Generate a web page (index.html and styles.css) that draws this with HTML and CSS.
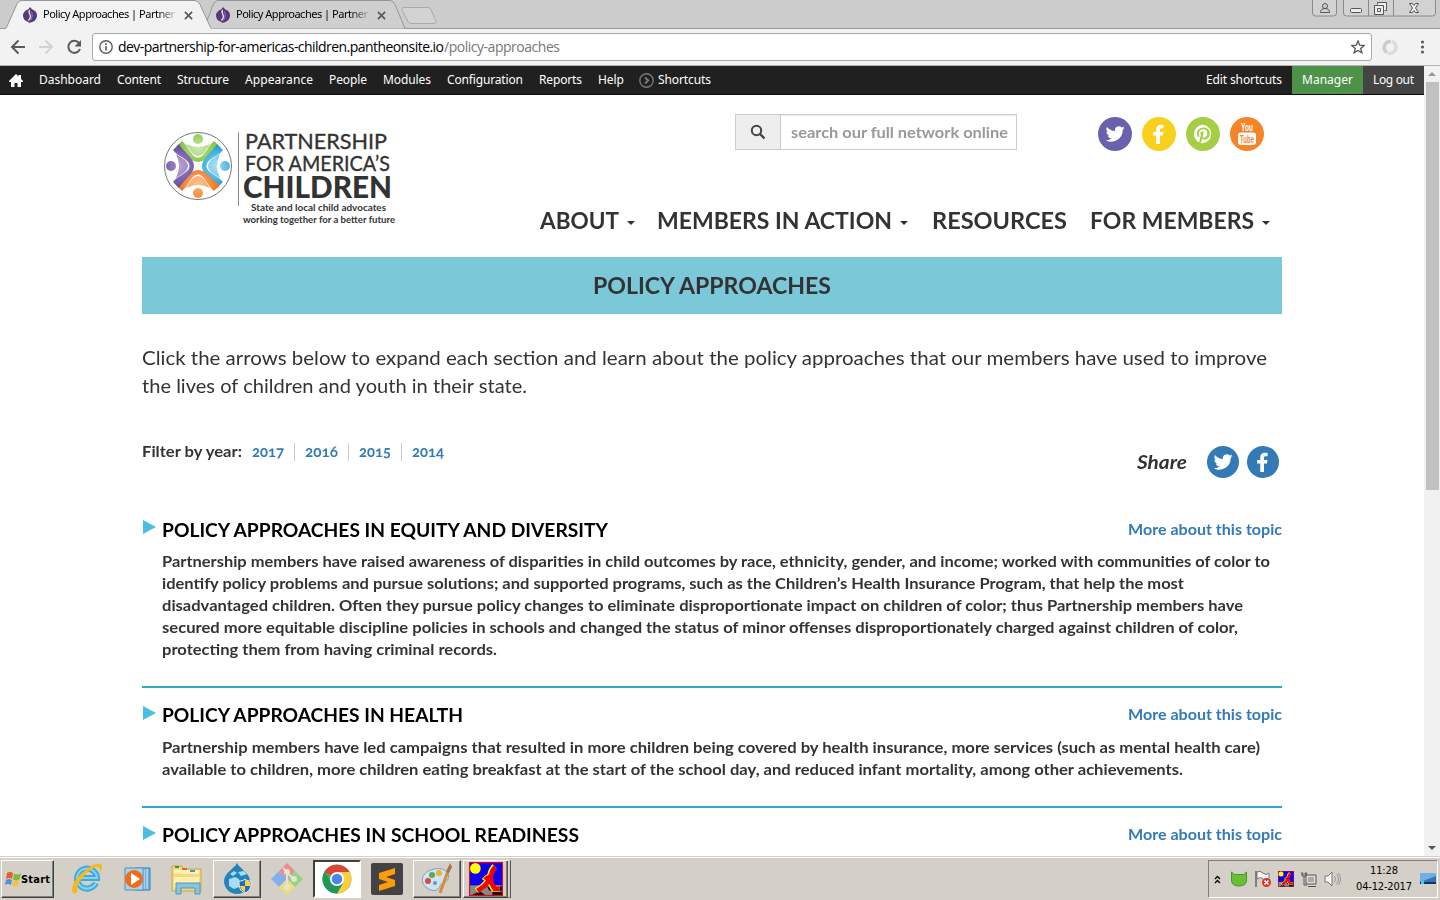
FILE: index.html
```html
<!DOCTYPE html>
<html lang="en">
<head>
<meta charset="utf-8">
<title>Policy Approaches | Partnership for America's Children</title>
<link rel="stylesheet" href="styles.css">
</head>
<body>
<svg class="defs" width="0" height="0">
  <defs>
    <symbol id="twitter" viewBox="0 0 24 24"><path d="M23.6 4.9c-.9.4-1.800.6-2.700.8 1-.6 1.700-1.500 2.100-2.600-.9.5-1.900.9-3 1.100A4.700 4.700 0 0 0 12 8.500c-4-.2-7.400-2.100-9.700-4.900-1.300 2.200-.6 5 1.500 6.300-.8 0-1.500-.2-2.100-.6 0 2.300 1.600 4.200 3.800 4.700-.7.2-1.400.2-2.100.1.600 1.900 2.300 3.200 4.400 3.300A9.600 9.600 0 0 1 .8 19.400 13.600 13.600 0 0 0 21.200 7.300c1-.6 1.800-1.500 2.400-2.400z"/></symbol>
    <symbol id="facebook" viewBox="0 0 24 24"><path d="M17.500 1.200v3.900h-2.300c-1.600 0-2 .8-2 2v2.600h4.200l-.6 4.200h-3.600V24H8.700V13.900H5V9.700h3.700V6.400c0-3.600 2.200-5.500 5.500-5.500 1.500 0 2.900.1 3.300.3z"/></symbol>
    <symbol id="pin" viewBox="0 0 24 24"><path d="M12 1a11 11 0 0 0-4.300 21.100c0-.8 0-1.900.2-2.800l1.500-6s-.4-.7-.4-1.700c0-1.700 1-2.900 2.200-2.900 1 0 1.500.8 1.500 1.700 0 1-.7 2.600-1 4-.3 1.200.6 2.200 1.800 2.200 2.100 0 3.600-2.800 3.600-6 0-2.500-1.700-4.300-4.700-4.300-3.400 0-5.500 2.500-5.500 5.400 0 1 .3 1.700.7 2.300.2.200.2.300.1.600l-.2.900c-.1.300-.3.400-.6.300C5.300 15.200 4.600 13.500 4.600 11.500 4.600 8.200 7.300 4.300 12.800 4.300c4.400 0 7.300 3.200 7.300 6.600 0 4.500-2.500 7.900-6.200 7.900-1.200 0-2.400-.7-2.800-1.400l-.8 3c-.3.900-.8 1.700-1.200 2.400A11 11 0 1 0 12 1z"/></symbol>
    <symbol id="favicon" viewBox="0 0 16 16"><path d="M8 0l2 2.200c3 1 5 3 5 6 0 4-3 6.600-6.500 7.400L7 16l-.5-1C3 14.300 1 11.800 1 8.600 1 5.500 3.500 3.200 6.200 2.400z" fill="#533a7c"/><path d="M7.600 3c-2 2.500 1.400 4.500.8 7-.2 1.500-1 2.500-2 3.500" fill="none" stroke="#eee" stroke-width="1.300"/><path d="M9.600 4.500c1 3 .8 6-1 9" fill="none" stroke="#b9a9d3" stroke-width=".6"/></symbol>
    <symbol id="runner" viewBox="0 0 32 32"><path fill="#f00" d="M0 0h32v32H0z"/><path fill="#1000f0" d="M1 1h30v30H1z"/><path fill="#888" d="M1 22h30v9H1z"/><path fill="#111" d="M3 31l7-4 5 4zM17 23h14v4H19zM22 28h9v3h-9z"/><circle cx="6" cy="6" r="5" fill="#ff0"/><path d="M24 4Q21 7 20 12T13 23L7 27M19 15Q20 21 23 25H29M14 14Q17 17 20 12" fill="none" stroke="#ff0" stroke-width="5.500"/><path d="M25 5Q22 7 21 12T14 23L8 27M20 15Q21 21 24 25H29M15 14Q18 17 21 12" fill="none" stroke="#f00008" stroke-width="4.500"/></symbol>
    <g id="figure"><circle cx="0" cy="-27" r="5"/><path d="M-22-19L-16-25C-9-20-7-8.500 0-8.500S9-20 16-25L22-19C12-13 8-4 0-4S-12-13-22-19z"/><path d="M-12-22Q0-16 12-22L6-13Q0-7-6-13z" opacity=".8"/></g>
    <radialGradient id="gg" gradientUnits="userSpaceOnUse" cx="0" cy="-19" r="20"><stop stop-color="#c6e3a4"/><stop offset="1" stop-color="#7ac032"/></radialGradient>
    <radialGradient id="gb" gradientUnits="userSpaceOnUse" cx="0" cy="-19" r="20"><stop stop-color="#9bdcf5"/><stop offset="1" stop-color="#229fd8"/></radialGradient>
    <radialGradient id="go" gradientUnits="userSpaceOnUse" cx="0" cy="-19" r="20"><stop stop-color="#fbb675"/><stop offset="1" stop-color="#f2731d"/></radialGradient>
    <radialGradient id="gp" gradientUnits="userSpaceOnUse" cx="0" cy="-19" r="20"><stop stop-color="#a68bc5"/><stop offset="1" stop-color="#6650a4"/></radialGradient>
  </defs>
</svg>

<div class="chrome">
  <div class="tabstrip">
    <svg class="tabshapes" width="1440" height="29" viewBox="0 0 1440 29">
      <path d="M0 28.500h1440" stroke="#979797"/>
      <path d="M204 28.500L213 5q2-4 4-4.500h173q3 0 5 4l10 24" fill="#cfcfcf" stroke="#979797"/>
      <path d="M6 28.500L17 4q2-3.500 4-3.500h174q3 0 5 4l11 24" fill="#f2f2f2" stroke="#979797"/>
      <path d="M6 29h205" stroke="#f2f2f2" stroke-width="2"/>
      <path d="M404 7.500h24q2 0 3 2l5 12q0 2-2 2h-23q-2 0-3-2l-6-12q0-2 2-2z" fill="#d3d3d3" stroke="#aaa"/>
    </svg>
    <div class="tab"><svg class="fav"><use href="#favicon"/></svg><span class="tabname"><span class="fit" data-w="132">Policy Approaches | Partner</span></span><svg class="x" viewBox="0 0 10 10"><path d="M1 1l8 8M9 1L1 9"/></svg></div>
    <div class="tab second"><svg class="fav"><use href="#favicon"/></svg><span class="tabname"><span class="fit" data-w="132">Policy Approaches | Partner</span></span><svg class="x" viewBox="0 0 10 10"><path d="M1 1l8 8M9 1L1 9"/></svg></div>
    <svg class="winbtns" width="126" height="18" viewBox="0 0 126 18">
      <g fill="#d2d2d2" stroke="#8a8a8a"><path d="M.5-1v14q0 3 3 3h18q3 0 3-3V-1"/><path d="M31.500-1v14q0 3 3 3h86q3 0 3-3V-1M56.500 0v16M81.500 0v16"/></g>
      <g fill="none" stroke="#555"><circle cx="13" cy="6" r="2.500"/><path d="M8.500 12.500q0-4 4.500-4t4.500 4z"/><rect x="38.500" y="8.500" width="11" height="4" rx="1" fill="#eee"/><path d="M65.500 4.500v-2h9v8h-2M62.500 5.500h9v9h-9zM65.500 8.500h3v3h-3z" fill="#eee"/><path d="M97.500 3.500h3l1.500 2 1.500-2h3l-3 4.500 3 4.500h-3l-1.500-2-1.500 2h-3l3-4.500z" fill="#eee"/></g>
    </svg>
  </div>
  <div class="toolbar">
    <svg class="navicons" width="84" height="36" viewBox="0 0 84 36">
      <g fill="none" stroke-width="2"><path d="M25 18H12M18.500 11.500L12 18l6.500 6.500" stroke="#5a5a5a"/><path d="M39 18h13M45.500 11.500L52 18l-6.500 6.500" stroke="#d2d2d2"/><path d="M79 14a6 6 0 1 0 1 6" stroke="#5a5a5a"/></g><path d="M81 11v6.500h-6.500z" fill="#5a5a5a"/>
    </svg>
    <div class="omnibox">
      <svg width="14" height="14" viewBox="0 0 14 14"><circle cx="7" cy="7" r="6.200" fill="none" stroke="#5a5a5a" stroke-width="1.400"/><path d="M7 6v4.500M7 3.200v1.700" stroke="#5a5a5a" stroke-width="1.600"/></svg>
      <span class="url"><span class="fit host" data-w="326">dev-partnership-for-americas-children.pantheonsite.io</span><span class="fit path" data-w="116">/policy-approaches</span></span>
      <svg class="star" width="14" height="14" viewBox="0 0 14 14"><path d="M7 1l1.700 4.200 4.500.3-3.500 2.900 1.200 4.400L7 10.400l-3.900 2.400 1.200-4.400L.8 5.500l4.500-.3z" fill="none" stroke="#555" stroke-width="1.300"/></svg>
    </div>
    <svg class="right" width="50" height="20" viewBox="0 0 50 20"><g fill="none" stroke-width="3.500"><path d="M7 15.500a6 6 0 0 1 4-11" stroke="#cdcdcd"/><path d="M12 4.500a6 6 0 0 1-4 11.500" stroke="#dcdcdc"/></g><g fill="#5a5a5a"><circle cx="42.500" cy="5" r="1.600"/><circle cx="42.500" cy="10" r="1.600"/><circle cx="42.500" cy="15" r="1.600"/></g></svg>
  </div>
</div>

<div class="viewport">
<div class="page">
  <nav class="admin">
    <svg class="home" width="14" height="13" viewBox="0 0 14 13"><path d="M7 0l2.500 2.500V1H12v4l2 2v1h-2v5H8.500V9h-3v4H2V8H0V7z" fill="#fff"/></svg>
    <span class="fit" data-w="62">Dashboard</span><span class="fit" data-w="44">Content</span><span class="fit" data-w="52">Structure</span><span class="fit" data-w="68">Appearance</span><span class="fit" data-w="38">People</span><span class="fit" data-w="48">Modules</span><span class="fit" data-w="76">Configuration</span><span class="fit" data-w="43">Reports</span><span class="fit" data-w="26">Help</span>
    <svg class="sc" width="15" height="15" viewBox="0 0 15 15"><g fill="none" stroke="#777" stroke-width="1.400"><circle cx="7.500" cy="7.500" r="6.700"/><path d="M6 4.500l3.200 3L6 10.500" stroke-width="2"/></g></svg><span class="fit" data-w="53">Shortcuts</span>
    <div class="user"><span class="edit"><span class="fit" data-w="76">Edit shortcuts</span></span><span class="manager"><span class="fit" data-w="51">Manager</span></span><span class="logout"><span class="fit" data-w="41">Log out</span></span></div>
  </nav>

  <header class="site">
    <svg class="logo" width="260" height="125" viewBox="150 115 260 125">
      <circle cx="198" cy="166" r="33.500" fill="#fff" stroke="#777"/>
      <g transform="translate(198 166)"><use href="#figure" fill="url(#gg)"/><use href="#figure" fill="url(#gb)" transform="rotate(90)"/><use href="#figure" fill="url(#go)" transform="rotate(180)"/><use href="#figure" fill="url(#gp)" transform="rotate(270)"/></g>
      <path d="M238.500 132.500v73.500" stroke="#888"/>
      <g class="logotext">
        <text x="245" y="148.500" textLength="142" lengthAdjust="spacingAndGlyphs" font-size="21.500" stroke="#333" stroke-width=".35">PARTNERSHIP</text>
        <text x="245" y="171" textLength="145" lengthAdjust="spacingAndGlyphs" font-size="21.500" stroke="#333" stroke-width=".35">FOR AMERICA’S</text>
        <text x="243" y="198" textLength="149" lengthAdjust="spacingAndGlyphs" font-size="30.500" font-weight="900">CHILDREN</text>
        <text x="251" y="211" textLength="135" lengthAdjust="spacingAndGlyphs" font-size="10" font-weight="700">State and local child advocates</text>
        <text x="243" y="223" textLength="152" lengthAdjust="spacingAndGlyphs" font-size="10" font-weight="700">working together for a better future</text>
      </g>
    </svg>
    <div class="headright">
      <div class="toprow">
        <div class="search"><span class="btn"><svg width="16" height="16" viewBox="0 0 16 16"><circle cx="6.500" cy="6.500" r="4.700" fill="none" stroke="#444" stroke-width="2"/><path d="M10 10l4.500 4.500" stroke="#444" stroke-width="2.400"/></svg></span><span class="field"><span class="fit wide" data-w="217">search our full network online</span></span></div>
        <div class="social">
          <span class="tw"><svg><use href="#twitter"/></svg></span><span class="fb"><svg><use href="#facebook"/></svg></span><span class="pi"><svg><use href="#pin"/></svg></span><span class="yt"><svg viewBox="0 0 20 24"><text x="4" y="9" textLength="12" lengthAdjust="spacingAndGlyphs" class="yttext">You</text><rect x="1" y="10.500" width="18" height="12.500" rx="3"/><text x="3" y="20.500" textLength="14" lengthAdjust="spacingAndGlyphs" class="yttext cut">Tube</text></svg></span>
        </div>
      </div>
      <nav class="menu"><a><span class="fit wide" data-w="79">ABOUT</span><i></i></a><a><span class="fit wide" data-w="235">MEMBERS IN ACTION</span><i></i></a><a><span class="fit wide" data-w="135">RESOURCES</span></a><a><span class="fit wide" data-w="164">FOR MEMBERS</span><i></i></a></nav>
    </div>
  </header>

  <main>
    <h1><span class="fit wide" data-w="238">POLICY APPROACHES</span></h1>
    <p class="intro"><span class="fit wide" data-w="1125">Click the arrows below to expand each section and learn about the policy approaches that our members have used to improve</span><br><span class="fit wide" data-w="385">the lives of children and youth in their state.</span></p>
    <div class="filterrow">
      <div class="filter"><span class="fit wide" data-w="100">Filter by year:</span><ul><li><a class="fit wide" data-w="32">2017</a></li><li><a class="fit wide" data-w="33">2016</a></li><li><a class="fit wide" data-w="32">2015</a></li><li><a class="fit wide" data-w="32">2014</a></li></ul></div>
      <div class="share"><em class="fit wide" data-w="50">Share</em><span><svg><use href="#twitter"/></svg></span><span><svg><use href="#facebook"/></svg></span></div>
    </div>
    <section class="first">
      <div class="head"><h2><span class="fit wide" data-w="446">POLICY APPROACHES IN EQUITY AND DIVERSITY</span></h2><a class="fit wide" data-w="154">More about this topic</a></div>
      <p><span class="fit wide" data-w="1108">Partnership members have raised awareness of disparities in child outcomes by race, ethnicity, gender, and income; worked with communities of color to</span><br><span class="fit wide" data-w="1022">identify policy problems and pursue solutions; and supported programs, such as the Children’s Health Insurance Program, that help the most</span><br><span class="fit wide" data-w="1081">disadvantaged children. Often they pursue policy changes to eliminate disproportionate impact on children of color; thus Partnership members have</span><br><span class="fit wide" data-w="1076">secured more equitable discipline policies in schools and changed the status of minor offenses disproportionately charged against children of color,</span><br><span class="fit wide" data-w="335">protecting them from having criminal records.</span></p>
    </section>
    <section>
      <div class="head"><h2><span class="fit wide" data-w="301">POLICY APPROACHES IN HEALTH</span></h2><a class="fit wide" data-w="154">More about this topic</a></div>
      <p><span class="fit wide" data-w="1098">Partnership members have led campaigns that resulted in more children being covered by health insurance, more services (such as mental health care)</span><br><span class="fit wide" data-w="1021">available to children, more children eating breakfast at the start of the school day, and reduced infant mortality, among other achievements.</span></p>
    </section>
    <section>
      <div class="head"><h2><span class="fit wide" data-w="417">POLICY APPROACHES IN SCHOOL READINESS</span></h2><a class="fit wide" data-w="154">More about this topic</a></div>
    </section>
  </main>
</div>
<div class="scrollbar"><i class="up"></i><div class="thumb"></div><i class="down"></i></div>
</div>

<footer class="taskbar">
  <div class="start raised"><svg width="17" height="17" viewBox="0 0 17 17"><path d="M3 2q3-2 6 0L8 8q-3-2-6 0z" fill="#ef5a2a"/><path d="M10 2.500q3 2 7 0l-1.500 6q-3 2-6.500 0z" fill="#7dbb3c"/><path d="M2 9q3-2 6 0l-1 5q-3-2-6 0z" fill="#4a94dc"/><path d="M9 9.500q3 2 6 0l-1 5q-3 2-6 0z" fill="#fdc02f"/></svg><span class="fit" data-w="29">Start</span></div>
  <div class="apps">
    <span><svg viewBox="0 0 34 34"><path d="M26 21A10 10 0 1 1 27 16H9" fill="none" stroke="#3fa9e0" stroke-width="6"/><path d="M26 21A10 10 0 1 1 27 16H9" fill="none" stroke="#87d4f5" stroke-width="2"/><path d="M3 31C-3 21 22-1 30 2c4 1 1 8 0 9 0-3 1-6-3-6C20 5 3 24 8 29q-3 4-5 2z" fill="#f5b91d"/></svg></span>
    <span><svg viewBox="0 0 34 34"><path d="M15 6h15v22H15z" fill="#6eb1de" stroke="#387fb2"/><path d="M27 7v20M24 7v20" stroke="#d8effa"/><path d="M5 6h18v22H5z" fill="#a7d4ef" stroke="#4c90bf"/><circle cx="14" cy="17" r="9" fill="#f26c18"/><path d="M11 11l9 6-9 6z" fill="#fff"/></svg></span>
    <span><svg viewBox="0 0 34 34"><path d="M2 29V4h10l2 3h17v22z" fill="#f3d981" stroke="#c9a642"/><path d="M4 8h25v4H4zM4 15h25v11H4z" fill="#fff0ae"/><path d="M5 4h4v2H5z" fill="#24a13c"/><path d="M12 6h5v2h-5z" fill="#d64"/><path d="M20 8h5v2h-5z" fill="#39c"/><path d="M6 32V21h24v11h-5v-6H11v6z" fill="#87c5df" stroke="#4c96b8"/></svg></span>
    <span class="raised"><svg viewBox="0 0 34 34"><path d="M17 1c2 5 13 10 13 18a13 13 0 0 1-26 0C4 11 15 6 17 1z" fill="#2384bd"/><path d="M9 17l6-2 4 2v8l-5 2-5-3zM18 10l6-1 3 3-6 2zM10 12l4-3 3 2-4 3z" fill="#a9dcf1"/><path d="M25 17c2 2 4 2 6 2 0 7-1 10-6 12-5-2-6-5-6-12 2 0 4 0 6-2z" fill="#1b6dd0" stroke="#eee"/><path d="M25 18v6h5V20zM25 24v6c-3-1-4-3-5-6z" fill="#ffd332"/></svg></span>
    <span class="git"><svg viewBox="0 0 34 34"><path d="M17 1l8 8-8 8-8-8z" fill="#ef8580"/><path d="M9 9l8 8-8 8-8-8z" fill="#7bacf0"/><path d="M25 9l8 8-8 8-8-8z" fill="#8bd47d"/><path d="M17 17l8 8-8 8-8-8z" fill="#f2df72"/><path d="M13 6l4 4v15M17 11l7 6" fill="none" stroke="#e9e4da" stroke-width="2"/><g fill="#e9e4da"><circle cx="17" cy="10" r="3"/><circle cx="24" cy="17" r="3"/><circle cx="17" cy="25" r="3"/></g></svg></span>
    <span class="pressed"><svg viewBox="0 0 34 34"><circle cx="17" cy="17" r="14.500" fill="#4caf50"/><path d="M17 17L4.500 9.700A14.500 14.500 0 0 1 29.500 10H17z" fill="#dc4437"/><path d="M17 10h12.600A14.500 14.500 0 0 1 17 31.500l6-10z" fill="#ffcd40"/><path d="M4.500 9.700A14.500 14.500 0 0 0 17 31.500l5.500-10H12z" fill="#23975b"/><circle cx="17" cy="17" r="7" fill="#fff"/><circle cx="17" cy="17" r="5.300" fill="#4687e8"/></svg></span>
    <span><svg viewBox="0 0 34 34"><rect x="1" y="1" width="32" height="32" rx="2" fill="#434343"/><path d="M25 6v6l-9 3 9 3v6L9 29v-6l9-3-9-3v-6z" fill="#ff9c08"/></svg></span>
    <span class="raised"><svg viewBox="0 0 34 34"><path d="M11 8C21 4 31 9 28 17c-2 5-7 3-8 7-1 5-8 6-13 2C-1 20 2 11 11 8z" fill="#cce4f3" stroke="#7c9eb6"/><circle cx="8" cy="19" r="3" fill="#d64a4a"/><circle cx="12" cy="13" r="3" fill="#58ae4d"/><circle cx="19" cy="11" r="3" fill="#efb22e"/><circle cx="15" cy="21" r="2" fill="#5b99ce"/><path d="M20 31l8-22" stroke="#d98c38" stroke-width="3"/><path d="M26 10l4-9 2 4-3 6z" fill="#a77246"/></svg></span>
    <span class="raised double"><svg viewBox="0 0 32 32"><use href="#runner"/></svg></span>
  </div>
  <div class="tray">
    <svg class="chev" width="7" height="9" viewBox="0 0 7 9"><path d="M1 4l2.500-2.500L6 4M1 8l2.500-2.500L6 8" fill="none" stroke="#000" stroke-width="1.300"/></svg>
    <svg width="18" height="16" viewBox="0 0 18 16"><path d="M1.500 1l3 2.500h9l3-2.500v8q0 6-7.500 6T1.500 9z" fill="#6abf35" stroke="#429a23"/></svg>
    <svg width="18" height="18" viewBox="0 0 18 18"><path d="M2 1v16" stroke="#666" stroke-width="1.500"/><path d="M3 2q3-2 6 1t6 0v7q-4 2-6-1T3 9z" fill="#f6f6f6" stroke="#777"/><circle cx="12.500" cy="12.500" r="4.500" fill="#d8342b"/><path d="M10.500 10.500l4 4M14.500 10.500l-4 4" stroke="#fff" stroke-width="1.500"/></svg>
    <svg width="16" height="16"><use href="#runner"/></svg>
    <svg width="18" height="17" viewBox="0 0 18 17"><path d="M6 4h10v9H6z" fill="#ddd" stroke="#555"/><path d="M8 6h6v5H8z" fill="#aaa"/><path d="M8 15.500h8M2 1v4h4V1M4 5v9h3M1.500 3h6" fill="none" stroke="#555"/></svg>
    <svg width="18" height="16" viewBox="0 0 18 16"><path d="M1 5h3l4-4v14l-4-4H1z" fill="#f5f5f5" stroke="#777"/><path d="M10.500 5q2 3 0 6M12.500 3q4 5 0 10M14.500 2q4 6 0 12" fill="none" stroke="#999"/></svg>
    <div class="clock"><span class="fit" data-w="28">11:28</span><span class="fit" data-w="56">04-12-2017</span></div>
    <svg class="desk" width="16" height="14" viewBox="0 0 16 14"><path d="M0 1h16v11H0z" fill="#2e75b9"/><path d="M0 1h16v3L3 9H0z" fill="#70b1e5"/><path d="M0 10h16v2H0z" fill="#123761"/><path d="M1 9h3v3H1z" fill="#4ccbe9"/></svg>
  </div>
</footer>
<script src="fit.js"></script>
</body>
</html>
```
FILE: styles.css
```css
* { box-sizing: border-box; }
body { margin: 0; width: 1440px; height: 900px; overflow: hidden; background: #fff; color: #333; font-family: Lato, "Open Sans", sans-serif; display: flex; flex-direction: column; }
.defs { position: absolute; }
.fit { display: inline-block; white-space: nowrap; }
.wide { transform-origin: 0 50%; text-align: left; }
svg { flex: none; display: block; }

.chrome { height: 66px; background: #f2f2f2; border-bottom: 1px solid #b4b4b4; flex: none; }
.tabstrip { position: relative; height: 29px; background: #ccc; display: flex; padding-left: 22px; color: #000; font: 11px "Noto Sans", sans-serif; }
.tabshapes { position: absolute; left: 0; top: 0; }
.tab { position: relative; display: flex; align-items: center; width: 193px; height: 28px; }
.fav { width: 16px; height: 16px; margin: 2px 5px 0 0; }
.tabname { width: 133px; margin-top: -1px; -webkit-mask-image: linear-gradient(90deg, #000 86%, transparent 102%); }
.tab .x { width: 9px; height: 9px; margin: 2px 0 0 8px; fill: none; stroke: #555; stroke-width: 1.800; }
.tabstrip .winbtns { position: relative; margin: 0 2px 0 auto; }
.toolbar { display: flex; height: 36px; align-items: center; }
.omnibox { margin-left: 8px; width: 1280px; height: 28px; background: #fff; border: 1px solid #a9a9a9; border-radius: 3px; display: flex; align-items: center; padding: 0 6px; }
.url { margin: -2px 0 0 5px; flex: 1; font: 14px "Open Sans", sans-serif; color: #000; display: flex; }
.path { color: #777; }
.right { margin-left: 8px; }

.viewport { height: 790px; flex: none; display: flex; overflow: hidden; }
.page { width: 1424px; height: 790px; overflow: hidden; }
.admin { height: 29px; background: #202020; border-bottom: 1px solid #0c0c0c; display: flex; align-items: center; padding-left: 9px; gap: 16px; color: #fff; font: 12px "Noto Sans", sans-serif; }
.admin .fit { margin-top: -1px; }
.admin .sc { margin: 1px -12px 0 -1px; }
.user { margin-left: auto; align-self: stretch; display: flex; }
.user > span { display: flex; align-items: center; padding: 0 10px; }
.manager { background: #4e9148; }
.logout { background: #444; }

.site { height: 162px; display: flex; padding: 19px 142px 0; }
.logo { margin: 1px 0 0 8px; }
.logotext { fill: #333; font-family: Lato, sans-serif; }
.headright { margin-left: auto; display: flex; flex-direction: column; }
.toprow { display: flex; height: 37px; padding-left: 195px; }
.search { display: flex; width: 282px; height: 36px; border: 1px solid #ccc; }
.btn { width: 45px; background: #eee; border-right: 1px solid #ccc; display: grid; place-items: center; flex: none; }
.field { padding: 6px 0 0 10px; flex: 1; color: #999; font-size: 15px; font-weight: 700; line-height: 22px; box-shadow: inset 0 1px 1px rgba(0,0,0,.08); }
.social { display: flex; gap: 10px; margin: 3px 0 0 81px; }
.social > span { width: 34px; height: 34px; border-radius: 50%; display: grid; place-items: center; }
.social svg, .share svg { width: 20px; height: 20px; fill: #fff; }
.tw { background: #6862ae; }
.fb { background: #f9d01e; }
.pi { background: #a6ce45; }
.yt { background: #f58529; }
.social .yt svg { height: 24px; }
.yttext { font: 700 10px "Liberation Sans", sans-serif; }
.cut { fill: #f58529; }
.menu { display: flex; margin-top: 56px; padding-right: 12px; font-size: 22.500px; font-weight: 700; line-height: 28px; }
.menu a { display: flex; align-items: center; margin-left: 22px; }
.menu a:first-child { margin-left: 0; }
.menu a:nth-child(3) { margin-left: 24px; }
.menu a:nth-child(4) { margin-left: 23px; }
.menu i { border: 4px solid transparent; border-top-color: #333; border-bottom: 0; margin: 3px 0 0 8px; }

main { padding: 0 142px; }
h1 { margin: 0; height: 57px; background: #7bc8d8; text-align: center; font-size: 22.500px; line-height: 57px; font-weight: 700; }
.intro { margin: 30px 0 0; font-size: 19px; line-height: 28px; }
.filterrow { height: 52px; display: flex; justify-content: space-between; margin-top: 31px; }
.filter { display: flex; font-size: 15px; font-weight: 700; line-height: 18px; padding-top: 11px; }
ul { display: flex; list-style: none; padding: 0; margin: 1px 0 0; height: 18px; }
li { padding: 0 10px; border-left: 1px solid #ccc; line-height: 17px; }
li:first-child { border: 0; }
a { color: #337ab7; }
.menu a { color: #333; }
li a { font-variant-numeric: oldstyle-nums; }
.share { display: flex; align-items: center; font-size: 18px; font-weight: 700; padding: 10px 3px 0 0; }
.share em { margin-right: 12px; }
.share > span { width: 32px; height: 32px; border-radius: 50%; background: #337ab7; display: grid; place-items: center; margin-left: 8px; }
section { position: relative; padding-left: 20px; border-bottom: 2px solid #2fa8c4; height: 120px; }
section::before { content: ""; position: absolute; left: 1px; top: 18px; border-left: 13px solid #49c0e2; border-top: 7px solid transparent; border-bottom: 7px solid transparent; }
.head { display: flex; justify-content: space-between; padding-top: 14px; height: 38px; }
.head > a { font-size: 15px; font-weight: 700; line-height: 24px; }
.first { margin-top: 34px; height: 171px; }
.first::before { top: 3px; }
.first .head { padding-top: 0; height: 23px; }
h2 { margin: 0; color: #000; font-size: 18.500px; line-height: 26px; font-weight: 700; }
section p { margin: 10px 0 0; font-size: 15px; line-height: 22px; font-weight: 700; }

.scrollbar { width: 16px; height: 790px; background: #f1f1f1; display: flex; flex-direction: column; align-items: center; }
.scrollbar i { border: 4px solid transparent; }
.scrollbar .up { border-bottom-color: #999; margin-top: 2px; }
.thumb { width: 13px; height: 408px; background: #c1c1c1; margin-top: 6px; }
.scrollbar .down { border-top-color: #555; margin: auto 0 2px; }

.taskbar { height: 44px; background: #d4d0c8; box-shadow: inset 0 1px #d4d0c8, inset 0 2px #fff; display: flex; align-items: flex-start; padding: 4px 2px 0 1px; color: #000; font: 11px "DejaVu Sans Condensed", "DejaVu Sans", sans-serif; }
.raised { border: 1px solid; border-color: #fff #404040 #404040 #fff; box-shadow: inset -1px -1px #808080; }
.start { width: 53px; height: 38px; display: flex; align-items: center; gap: 0; padding-left: 2px; font-weight: 700; }
.apps { display: flex; margin-left: 9px; gap: 2px; }
.apps > span { width: 48px; height: 38px; display: grid; place-items: center; }
.apps svg { width: 34px; height: 34px; }
.git { opacity: .9; }
.apps .pressed { background: #fff; border: 2px solid; border-color: #404040 #fff #fff #404040; }
.apps .double { border-right: 4px double #555; }
.tray { margin-left: auto; width: 230px; height: 38px; border: 1px solid; border-color: #808080 #fff #fff #808080; display: flex; align-items: center; padding-left: 5px; gap: 6px; }
.chev { margin-right: 3px; }
.clock { width: 58px; margin: 0 1px 0 7px; display: flex; flex-direction: column; align-items: center; line-height: 16px; flex: none; }
```
FILE: fit.js
```js
// Sets each text run to the measure in data-w: headings and copy by glyph
// width (.wide), interface labels by tracking.
function fit() {
  document.querySelectorAll('.fit[data-w]').forEach(function (el) {
    el.style.letterSpacing = '0px';
    el.style.transform = 'none';
    var target = Number(el.dataset.w);
    var range = document.createRange();
    range.selectNodeContents(el);
    var natural = range.getBoundingClientRect().width;
    if (el.classList.contains('wide')) {
      el.style.transform = 'scaleX(' + target / natural + ')';
    } else {
      el.style.letterSpacing = (target - natural) / (el.textContent.length - 1) + 'px';
    }
    el.style.width = target + 'px';
  });
}
fit();
document.fonts.ready.then(fit);
```
